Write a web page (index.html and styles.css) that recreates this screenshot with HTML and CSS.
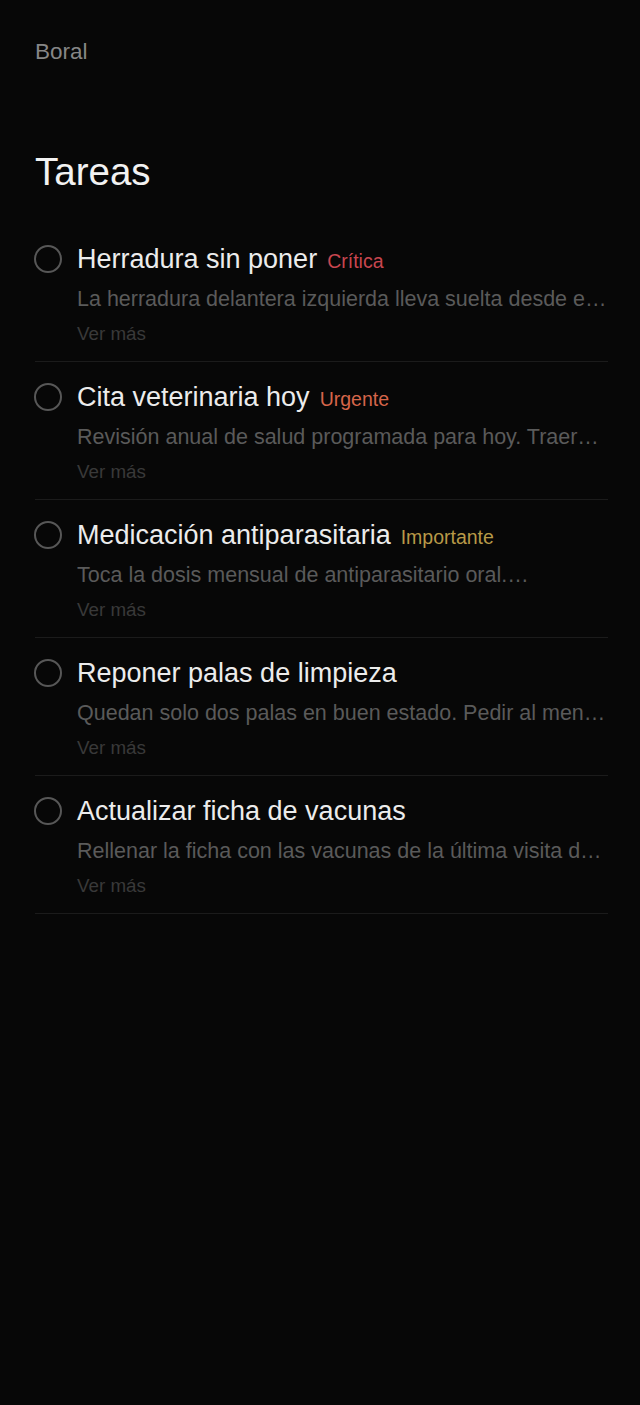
FILE: index.html
```html
<!DOCTYPE html>
<html lang="es">
<head>
<meta charset="utf-8">
<title>Tareas</title>
<link rel="stylesheet" href="styles.css">
</head>
<body>
<main class="page">
  <div class="eyebrow">Boral</div>
  <h1 class="heading">Tareas</h1>
  <ul class="tasks">
    <li class="task">
      <span class="check"><span class="ring"></span></span>
      <div class="body">
        <div class="title-line"><span class="title">Herradura sin poner</span><span class="tag tag-critical">Crítica</span></div>
        <div class="desc">La herradura delantera izquierda lleva suelta desde e…</div>
        <div class="more">Ver más</div>
      </div>
    </li>
    <li class="task">
      <span class="check"><span class="ring"></span></span>
      <div class="body">
        <div class="title-line"><span class="title">Cita veterinaria hoy</span><span class="tag tag-urgent">Urgente</span></div>
        <div class="desc">Revisión anual de salud programada para hoy. Traer…</div>
        <div class="more">Ver más</div>
      </div>
    </li>
    <li class="task">
      <span class="check"><span class="ring"></span></span>
      <div class="body">
        <div class="title-line"><span class="title">Medicación antiparasitaria</span><span class="tag tag-important">Importante</span></div>
        <div class="desc">Toca la dosis mensual de antiparasitario oral.…</div>
        <div class="more">Ver más</div>
      </div>
    </li>
    <li class="task">
      <span class="check"><span class="ring"></span></span>
      <div class="body">
        <div class="title-line"><span class="title">Reponer palas de limpieza</span></div>
        <div class="desc">Quedan solo dos palas en buen estado. Pedir al men…</div>
        <div class="more">Ver más</div>
      </div>
    </li>
    <li class="task">
      <span class="check"><span class="ring"></span></span>
      <div class="body">
        <div class="title-line"><span class="title">Actualizar ficha de vacunas</span></div>
        <div class="desc">Rellenar la ficha con las vacunas de la última visita d…</div>
        <div class="more">Ver más</div>
      </div>
    </li>
  </ul>
</main>
</body>
</html>
```
FILE: styles.css
```css
html, body {
  margin: 0;
  padding: 0;
  background: #070707;
}
body {
  font-family: "Liberation Sans", Arial, Helvetica, sans-serif;
  min-height: 1405px;
}
.page {
  padding: 39px 32px 0 35px;
}
.eyebrow {
  font-size: 22.5px;
  line-height: 26px;
  color: #868686;
}
.heading {
  margin: 85px 0 0 0;
  font-size: 38.5px;
  line-height: 44px;
  font-weight: 400;
  color: #f2f2f2;
}
.tasks {
  list-style: none;
  margin: 30px 0 0 0;
  padding: 0;
}
.task {
  display: flex;
  gap: 15px;
  padding: 19px 0 16px 0;
  border-bottom: 1px solid #1b1b1b;
}
.check {
  flex: 0 0 28px;
  height: 32px;
  display: flex;
  align-items: center;
  margin-left: -1px;
}
.ring {
  box-sizing: border-box;
  width: 28px;
  height: 28px;
  border-radius: 50%;
  border: 2px solid #575757;
}
.body {
  flex: 1;
  min-width: 0;
}
.title-line {
  display: flex;
  align-items: baseline;
  gap: 10px;
  height: 32px;
}
.title {
  font-size: 27px;
  line-height: 32px;
  color: #ececec;
  white-space: nowrap;
}
.tag {
  font-size: 19.5px;
  line-height: 32px;
  white-space: nowrap;
}
.tag-critical { color: #c8464f; }
.tag-urgent { color: #d6654a; }
.tag-important { color: #b89947; }
.desc {
  margin-top: 11px;
  font-size: 21.5px;
  line-height: 26px;
  color: #5a5a5a;
  white-space: nowrap;
  overflow: hidden;
  text-overflow: ellipsis;
}
.more {
  margin-top: 11px;
  font-size: 18.8px;
  line-height: 22px;
  color: #393939;
}
```
